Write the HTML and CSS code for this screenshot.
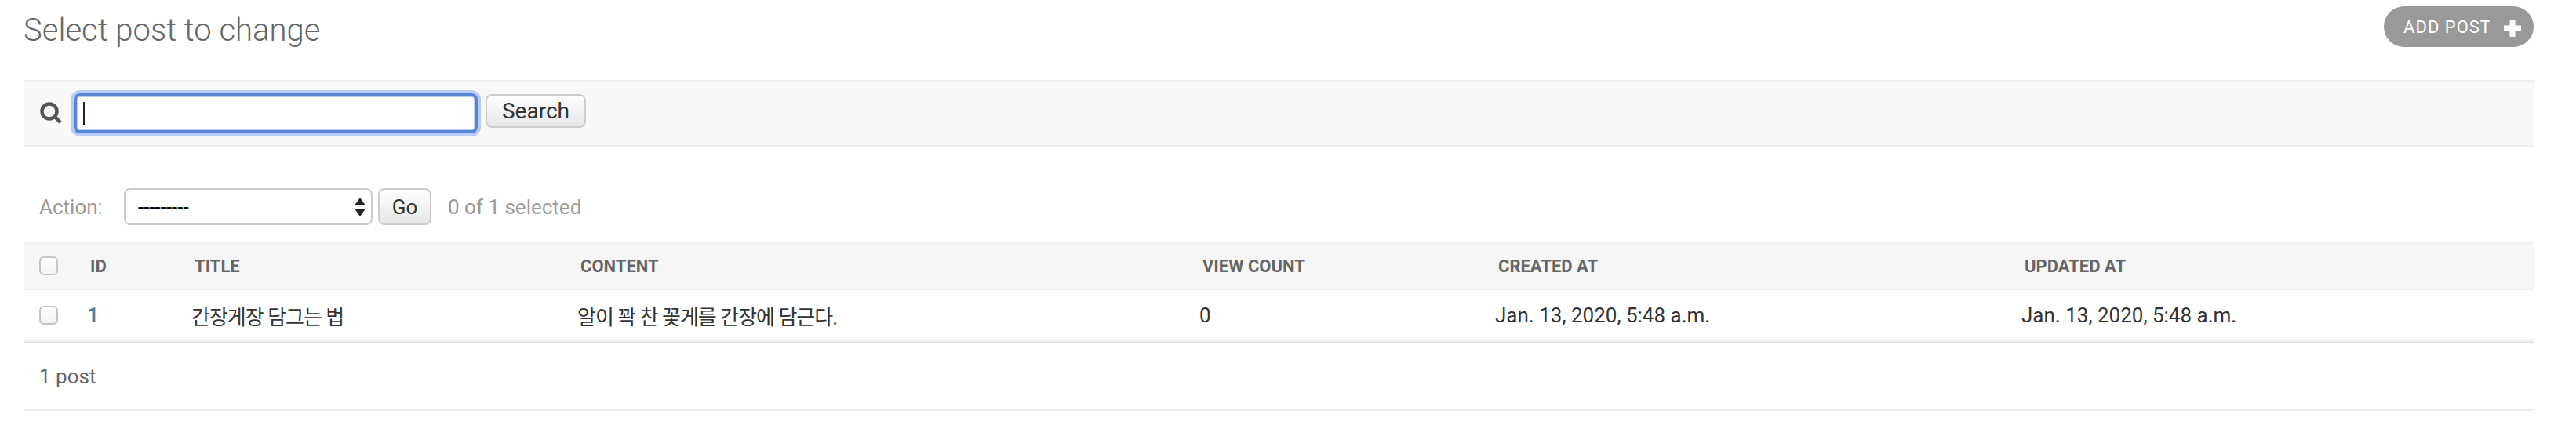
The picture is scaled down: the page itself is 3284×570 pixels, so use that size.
FILE: index.html
```html
<!DOCTYPE html>
<html>
<head>
  <title>Select post to change</title>
  <link rel="stylesheet" href="styles.css">
</head>
<body>
  <div class="content">
    <div class="page-head">
      <h1>Select post to change</h1>
      <a class="add-link" href="#">ADD POST
        <svg class="add-icon" viewBox="0 0 22 22"><path d="M11 0v22M0 11h22"/></svg>
      </a>
    </div>

    <form class="toolbar">
      <svg class="search-icon" viewBox="0 0 28 28"><circle cx="12" cy="12" r="9.5"/><path d="M19 19l7 7"/></svg>
      <input class="search-input" type="text">
      <button class="btn search-btn" type="button">Search</button>
    </form>

    <div class="actions">
      <label class="action-label">Action:</label>
      <div class="select-wrap">
        <select class="action-select"><option>---------</option></select>
      </div>
      <button class="btn go-btn" type="button">Go</button>
      <span class="action-counter">0 of 1 selected</span>
    </div>

    <table class="results">
      <colgroup>
        <col class="col-check"><col class="col-id"><col class="col-title"><col class="col-content">
        <col class="col-views"><col class="col-created"><col class="col-updated">
      </colgroup>
      <thead>
        <tr>
          <th class="check-cell"><span class="checkbox"></span></th>
          <th>ID</th>
          <th>TITLE</th>
          <th>CONTENT</th>
          <th>VIEW COUNT</th>
          <th>CREATED AT</th>
          <th>UPDATED AT</th>
        </tr>
      </thead>
      <tbody>
        <tr>
          <td class="check-cell"><span class="checkbox"></span></td>
          <td><a class="row-link" href="#">1</a></td>
          <td class="ko">간장게장 담그는 법</td>
          <td class="ko">알이 꽉 찬 꽃게를 간장에 담근다.</td>
          <td>0</td>
          <td>Jan. 13, 2020, 5:48 a.m.</td>
          <td>Jan. 13, 2020, 5:48 a.m.</td>
        </tr>
      </tbody>
    </table>

    <p class="paginator">1 post</p>
  </div>
</body>
</html>
```

FILE: styles.css
```css
body { margin: 0; background: #fff; color: #333; font-family: Roboto, "Noto Sans CJK KR", sans-serif; font-size: 26px; }
.content { width: 3200px; margin-left: 30px; }

.page-head { display: flex; justify-content: space-between; align-items: flex-start; height: 102px; }
h1 { margin: 17px 0 0; font-size: 40px; font-weight: 300; line-height: 44px; color: #666; }
.add-link { display: flex; align-items: center; gap: 16px; height: 52px; margin-top: 8px; padding: 0 16px 0 25px; border-radius: 26px; background: #999; color: #fff; font-size: 22px; letter-spacing: 1px; text-decoration: none; }
.add-icon { width: 22px; height: 22px; margin-top: 4px; fill: none; stroke: #fff; stroke-width: 7; }

.toolbar { display: flex; align-items: center; height: 81px; padding-left: 21px; border-top: 2px solid #eee; border-bottom: 2px solid #eee; background: #f8f8f8; }
.search-icon { width: 28px; height: 28px; margin-top: -2px; fill: none; stroke: #555; stroke-width: 4.5; }
.search-input { box-sizing: border-box; width: 515px; height: 51px; margin: 0 10px 0 15px; padding: 0; border: 4px solid #5a84da; border-radius: 8px; outline: 0; box-shadow: 0 0 0 4px #b5cdf7, inset 0 0 0 1px #b9cff6; background: #fff linear-gradient(#222, #222) no-repeat 8px 7px / 2px 30px; }

.btn { box-sizing: border-box; height: 47px; padding: 0; border: 2px solid #ccc; border-radius: 8px; background: linear-gradient(#fff, #e6e6e6); color: #333; font-family: Roboto, sans-serif; font-size: 26px; }
.search-btn { width: 128px; height: 43px; margin-top: -6px; font-size: 28px; }
.go-btn { width: 68px; margin-left: 7px; }

.actions { display: flex; align-items: center; height: 47px; margin: 53px 0 21px; color: #999; }
.action-label { box-sizing: border-box; width: 128px; padding-left: 20px; }
.select-wrap { position: relative; width: 317px; height: 47px; }
.select-wrap::before, .select-wrap::after { content: ""; position: absolute; right: 9px; border-left: 7px solid transparent; border-right: 7px solid transparent; }
.select-wrap::before { top: 12px; border-bottom: 10px solid #222; }
.select-wrap::after { top: 26px; border-top: 10px solid #222; }
.action-select { appearance: none; box-sizing: border-box; width: 100%; height: 47px; padding: 0 0 0 16px; border: 2px solid #ccc; border-radius: 8px; background: #fff; color: #000; font-family: Roboto, sans-serif; font-size: 26px; }
.action-counter { margin-left: 21px; }

.results { width: 100%; table-layout: fixed; border-collapse: separate; border-spacing: 0; border-bottom: 2px solid #ddd; }
.col-check { width: 65px; }
.col-id { width: 133px; }
.col-title { width: 492px; }
.col-content { width: 793px; }
.col-views { width: 377px; }
.col-created { width: 671px; }
.col-updated { width: 669px; }
th { box-sizing: border-box; height: 62px; padding: 0 20px; border-top: 2px solid #eee; border-bottom: 2px solid #eee; background: #f6f6f6; color: #666; font-size: 22px; font-weight: 700; text-align: left; }
td { box-sizing: border-box; height: 66px; padding: 0 16px; border-bottom: 2px solid #eee; text-align: left; }
.check-cell { padding: 0 0 0 20px; }
.ko { letter-spacing: -1px; }
.row-link { color: #447e9b; font-weight: 700; text-decoration: none; }
.checkbox { display: block; box-sizing: border-box; width: 24px; height: 24px; border: 2px solid #c4c4c4; border-radius: 6px; background: linear-gradient(#fff, #f2f2f2); }

.paginator { box-sizing: border-box; height: 86px; margin: 0; padding: 0 20px; border-bottom: 2px solid #eee; color: #666; line-height: 84px; }
```
